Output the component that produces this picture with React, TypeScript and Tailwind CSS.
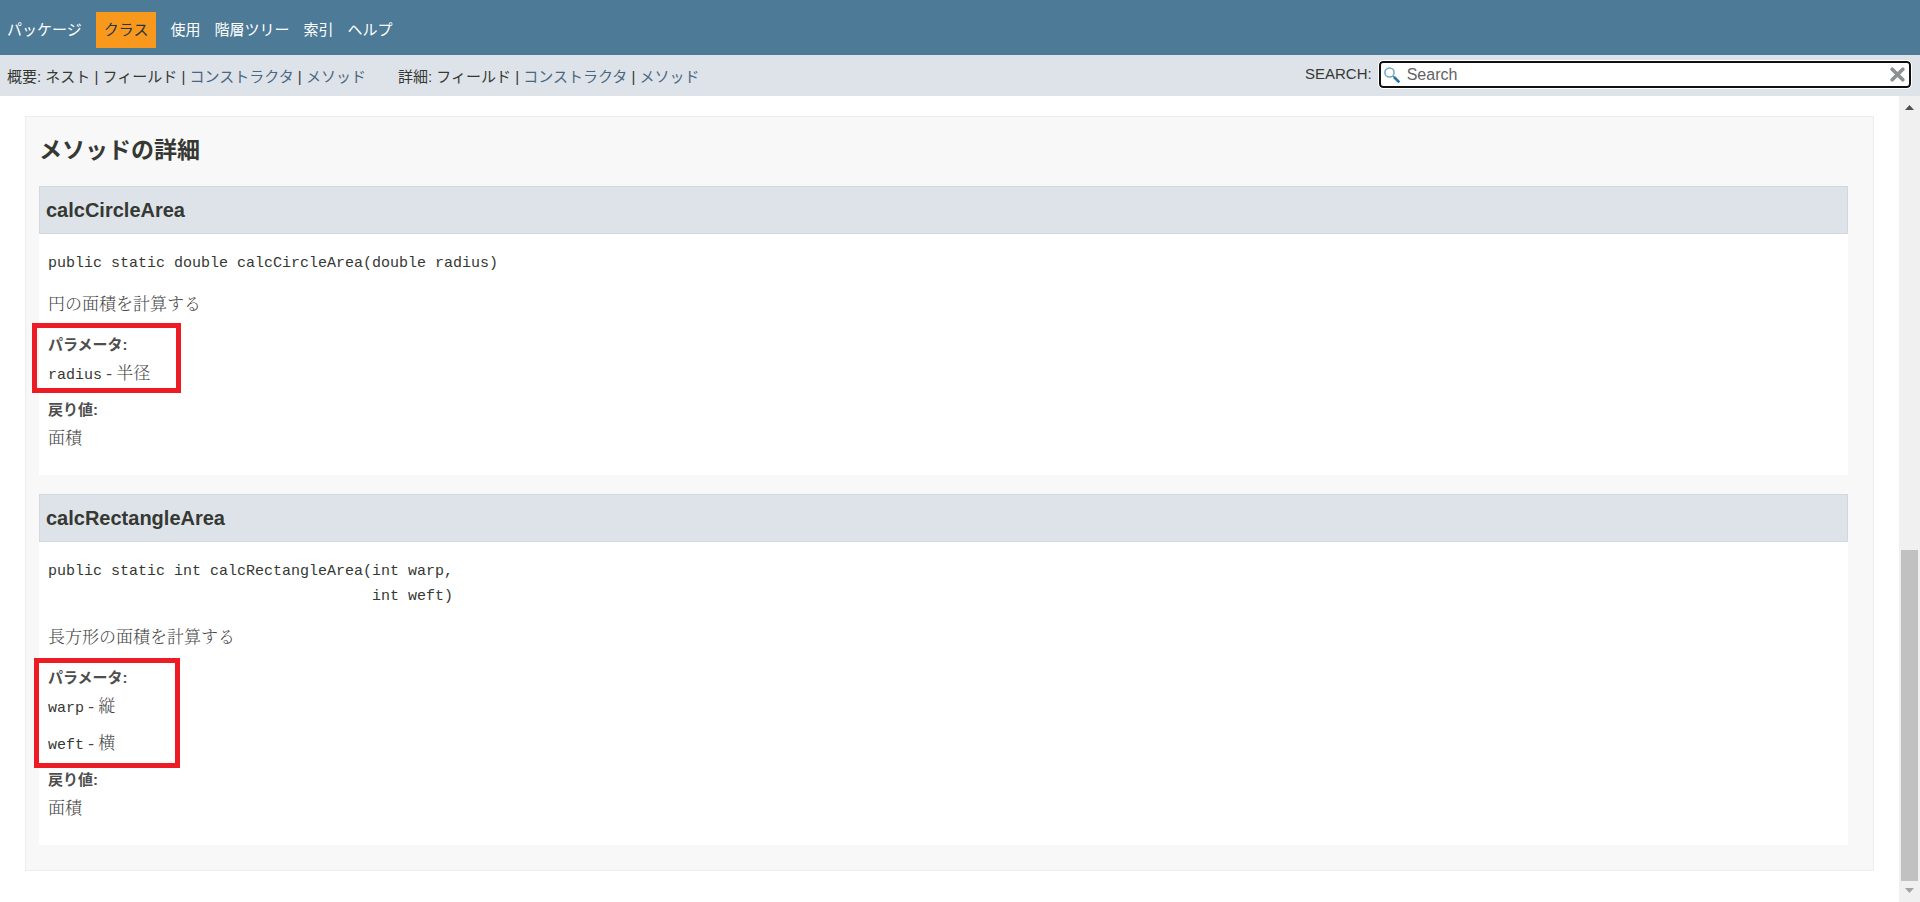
import type { ReactNode } from "react";

type NavItem = { label: string; active?: boolean };
type SubItem = { label: string; link?: boolean };
type Param = { name: string; text: string };
type Method = {
  name: string;
  signature: string;
  description: string;
  params: Param[];
  returns: string;
  mark: string;
};

const NAV_ITEMS: NavItem[] = [
  { label: "パッケージ" },
  { label: "クラス", active: true },
  { label: "使用" },
  { label: "階層ツリー" },
  { label: "索引" },
  { label: "ヘルプ" },
];

const SUMMARY: SubItem[] = [
  { label: "ネスト" },
  { label: "フィールド" },
  { label: "コンストラクタ", link: true },
  { label: "メソッド", link: true },
];

const DETAIL: SubItem[] = SUMMARY.slice(1);

const METHODS: Method[] = [
  {
    name: "calcCircleArea",
    signature: "public static double calcCircleArea(double radius)",
    description: "円の面積を計算する",
    params: [{ name: "radius", text: "半径" }],
    returns: "面積",
    mark: "-left-4 -top-[10px] h-[70px] w-[149px]",
  },
  {
    name: "calcRectangleArea",
    signature: "public static int calcRectangleArea(int warp,\n" + " ".repeat(36) + "int weft)",
    description: "長方形の面積を計算する",
    params: [
      { name: "warp", text: "縦" },
      { name: "weft", text: "横" },
    ],
    returns: "面積",
    mark: "-left-[14px] -top-2 h-[110px] w-[146px]",
  },
];

const SubNav = ({ title, items }: { title: string; items: SubItem[] }) => (
  <div>
    {title}:{" "}
    {items.map((item, i) => (
      <span key={item.label}>
        {i > 0 && " | "}
        {item.link ? (
          <a href="#method-detail" className="text-[#4a6782]">
            {item.label}
          </a>
        ) : (
          item.label
        )}
      </span>
    ))}
  </div>
);

const Header = () => (
  <header className="shrink-0 text-[15px]">
    <nav className="h-[55px] bg-[#4d7a97] flex items-center pt-1 pl-[7px] pr-2 text-white">
      <ul className="flex items-center gap-[14px] leading-6">
        {NAV_ITEMS.map((item) => (
          <li key={item.label}>
            <a
              href="#top"
              className={item.active ? "block bg-[#f8981d] text-[#253441] px-2 py-[6px]" : "block"}
            >
              {item.label}
            </a>
          </li>
        ))}
      </ul>
    </nav>

    <div className="h-[41px] bg-[#dee3e9] flex items-center justify-between pl-[7px] pr-[9px]">
      <div className="flex gap-8 pt-[3px] leading-6">
        <SubNav title="概要" items={SUMMARY} />
        <SubNav title="詳細" items={DETAIL} />
      </div>

      {/* search box */}
      <form className="flex items-center gap-[7px] w-[606px] pb-[2px]" onSubmit={(e) => e.preventDefault()}>
        <label htmlFor="search-input">SEARCH:</label>
        <div className="relative flex-1">
          <input
            id="search-input"
            type="text"
            placeholder="Search"
            className="block w-full h-[27px] rounded-[4px] border-2 border-[#101010] outline outline-white bg-white pl-[26px] pr-7 text-[16px] placeholder:text-[#636363]"
          />
          <svg viewBox="0 0 16 16" className="absolute left-[5px] top-[6px] size-4" fill="none">
            <circle cx="5.5" cy="5.5" r="4.6" stroke="#6fa9c4" strokeWidth="1.5" />
            <path d="M9 9l1.500 1.500" stroke="#5b93b3" strokeWidth="1.4" />
            <path d="M10 10l5.300 5.300" stroke="#2478a8" strokeWidth="2.6" />
          </svg>
          <button type="reset" aria-label="Reset" className="absolute right-[6px] top-[6px] size-[15px]">
            <svg viewBox="0 0 15 15" className="size-full" stroke="#8b9093" strokeWidth="3.6" strokeLinecap="round">
              <path d="M2.200 2.200l10.600 10.600M12.800 2.200L2.200 12.800" />
            </svg>
          </button>
        </div>
      </form>
    </div>
  </header>
);

const Term = ({ children }: { children: ReactNode }) => (
  <dt className="text-[15px] leading-6 font-bold text-[#4e4e4e]">{children}</dt>
);

const Desc = ({ children }: { children: ReactNode }) => (
  <dd className="mt-1 mb-3 last:mb-0 text-[17px] leading-[25px] font-light font-['Liberation_Serif','Noto_Serif_CJK_JP','Noto_Sans_CJK_JP',serif] text-[#474747]">
    {children}
  </dd>
);

const MethodBlock = ({ method }: { method: Method }) => (
  <section>
    <h3 className="h-12 border border-[#d0d9e0] bg-[#dee3e9] px-[6px] text-[20px] leading-[46px] font-bold">
      {method.name}
    </h3>
    <div className="bg-white pt-[17px] pb-6 px-[9px]">
      <pre className="text-[15px] leading-[25px] font-['Liberation_Mono',monospace]">{method.signature}</pre>
      <p className="mt-4 text-[17px] leading-[25px] font-light font-['Liberation_Serif','Noto_Serif_CJK_JP','Noto_Sans_CJK_JP',serif] text-[#474747]">
        {method.description}
      </p>
      <div className="relative mt-4">
        <dl>
          <Term>パラメータ:</Term>
          {method.params.map((param) => (
            <Desc key={param.name}>
              <code className="text-[15px] leading-none font-normal font-['Liberation_Mono',monospace] text-[#353833]">
                {param.name}
              </code>{" "}
              - {param.text}
            </Desc>
          ))}
          <Term>戻り値:</Term>
          <Desc>{method.returns}</Desc>
        </dl>
        {/* red marker around the parameter list */}
        <div className={`absolute border-[5px] border-[#ed1c24] ${method.mark}`} />
      </div>
    </div>
  </section>
);

const ScrollBar = () => (
  <div className="w-[21px] shrink-0 bg-[#f0f0f0] flex flex-col items-center" aria-hidden="true">
    <svg viewBox="0 0 21 21" className="size-[21px] shrink-0">
      <path d="M6 14h9l-4.500-5z" fill="#505050" />
    </svg>
    <div className="grow-[433]" />
    <div className="w-[17px] grow-[331] bg-[#c1c1c1]" />
    <svg viewBox="0 0 21 21" className="size-[21px] shrink-0">
      <path d="M6 7h9l-4.500 5z" fill="#a3a3a3" />
    </svg>
  </div>
);

export default function App() {
  return (
    <div
      id="top"
      lang="ja"
      className="h-screen flex flex-col bg-white text-[#353833] font-['Liberation_Sans','Noto_Sans_CJK_JP',sans-serif]"
    >
      <Header />
      <div className="flex flex-1 min-h-0">
        <main className="flex-1 overflow-hidden px-[25px] pt-5">
          <section
            id="method-detail"
            className="border border-[#ededed] bg-[#f8f8f8] pt-[18px] pb-[25px] pl-[13px] pr-[25px]"
          >
            <h2 className="mb-5 text-[23px] leading-[31px] font-bold">メソッドの詳細</h2>
            <div className="flex flex-col gap-[19px]">
              {METHODS.map((method) => (
                <MethodBlock key={method.name} method={method} />
              ))}
            </div>
          </section>
        </main>
        <ScrollBar />
      </div>
    </div>
  );
}
